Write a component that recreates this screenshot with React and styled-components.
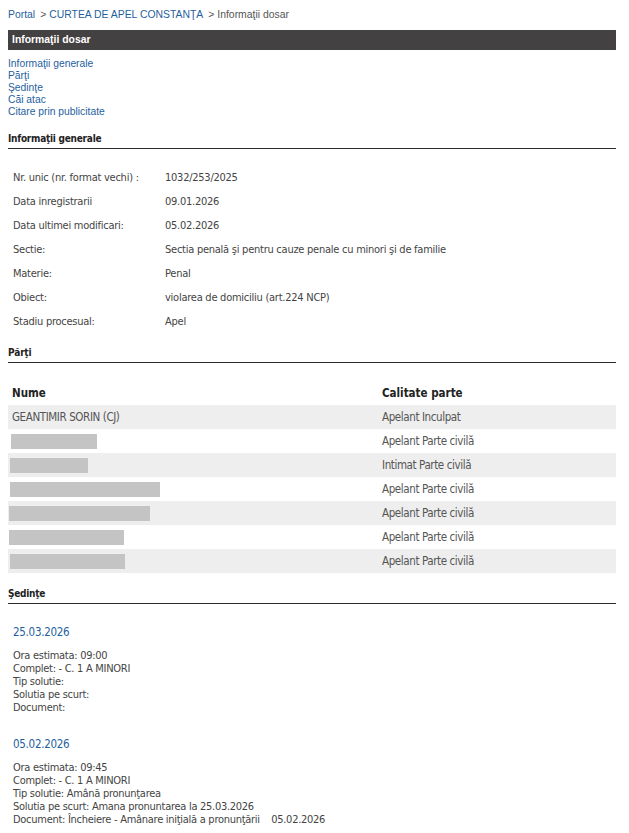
import React from "react";
import styled, { createGlobalStyle } from "styled-components";

const Global = createGlobalStyle`
  body { margin: 8px; background: #fff; font-family: "Liberation Sans", Arial, sans-serif; }
`;

const Tahoma = `"DejaVu Sans Condensed", Tahoma, sans-serif`;

const Page = styled.div`
  width: 608px;
`;

const Crumbs = styled.div`
  font-size: 10.4px;
  line-height: 14px;
  color: #555;
  a { color: #1f5f9e; text-decoration: none; }
`;

const Sep = styled.span`
  margin: 0 3px 0 5px;
  color: #555;
`;

const TitleBar = styled.div`
  margin-top: 8px;
  height: 20px;
  background: #444142;
  color: #fff;
  font-weight: bold;
  font-size: 10.4px;
  line-height: 20px;
  padding-left: 4px;
`;

const Nav = styled.div`
  margin-top: 8px;
  display: flex;
  flex-direction: column;
  font-size: 10.3px;
  line-height: 12px;
  a { color: #1f5f9e; text-decoration: none; }
`;

const SectionHead = styled.div`
  margin-top: ${(p) => p.$mt}px;
  font-family: ${Tahoma};
  font-weight: bold;
  font-size: 10px;
  letter-spacing: -0.25px;
  line-height: 13px;
  color: #222;
  padding-bottom: 3px;
  border-bottom: 1px solid #2b2b2b;
`;

const InfoTable = styled.div`
  margin-top: 16px;
  display: grid;
  grid-template-columns: 152px 1fr;
  grid-auto-rows: 24px;
  font-family: ${Tahoma};
  font-size: 11px;
  letter-spacing: -0.25px;
  color: #444;
  align-items: center;
  padding-left: 5px;
`;

const PartiTable = styled.div`
  margin-top: 18px;
  font-family: ${Tahoma};
`;

const PRow = styled.div`
  display: grid;
  grid-template-columns: 370px 1fr;
  height: 24px;
  align-items: center;
  background: ${(p) => (p.$striped ? "#eeeeee" : "#fff")};
  color: ${(p) => (p.$head ? "#222" : "#555")};
  font-weight: ${(p) => (p.$head ? "bold" : "normal")};
  font-size: 11.5px;
  letter-spacing: ${(p) => (p.$head ? "0px" : "-0.4px")};
  padding-left: 4px;
`;

const Redact = styled.span`
  display: block;
  height: 15px;
  background: #c4c4c4;
  margin-left: ${(p) => p.$x}px;
  width: ${(p) => p.$w}px;
`;

const Hearing = styled.div`
  margin-top: ${(p) => p.$mt}px;
  padding-left: 5px;
  font-family: ${Tahoma};
  font-size: 11px;
  letter-spacing: -0.28px;
  color: #444;
`;

const HDate = styled.div`
  color: #1f5f9e;
  font-size: 11.5px;
  line-height: 14px;
  margin-bottom: 10px;
`;

const HLine = styled.div`
  line-height: 13px;
  white-space: pre;
`;

const info = [
  ["Nr. unic (nr. format vechi) :", "1032/253/2025"],
  ["Data inregistrarii", "09.01.2026"],
  ["Data ultimei modificari:", "05.02.2026"],
  ["Sectie:", "Sectia penală şi pentru cauze penale cu minori şi de familie"],
  ["Materie:", "Penal"],
  ["Obiect:", "violarea de domiciliu (art.224 NCP)"],
  ["Stadiu procesual:", "Apel"],
];

const parti = [
  { name: "GEANTIMIR SORIN (CJ)", q: "Apelant Inculpat" },
  { r: [-1, 86], q: "Apelant Parte civilă" },
  { r: [-2, 78], q: "Intimat Parte civilă" },
  { r: [-2, 150], q: "Apelant Parte civilă" },
  { r: [-3, 141], q: "Apelant Parte civilă" },
  { r: [-3, 115], q: "Apelant Parte civilă" },
  { r: [-2, 115], q: "Apelant Parte civilă" },
];

const hearings = [
  {
    date: "25.03.2026",
    lines: [
      "Ora estimata: 09:00",
      "Complet: - C. 1 A MINORI",
      "Tip solutie:",
      "Solutia pe scurt:",
      "Document:",
    ],
  },
  {
    date: "05.02.2026",
    lines: [
      "Ora estimata: 09:45",
      "Complet: - C. 1 A MINORI",
      "Tip solutie: Amână pronunţarea",
      "Solutia pe scurt: Amana pronuntarea la 25.03.2026",
      "Document: Încheiere - Amânare iniţială a pronunţării    05.02.2026",
    ],
  },
];

export default function App() {
  return (
    <Page>
      <Global />
      <Crumbs>
        <a href="#">Portal</a>
        <Sep>&gt;</Sep>
        <a href="#">CURTEA DE APEL CONSTANŢA</a>
        <Sep>&gt;</Sep>
        Informaţii dosar
      </Crumbs>
      <TitleBar>Informaţii dosar</TitleBar>
      <Nav>
        <a href="#">Informaţii generale</a>
        <a href="#">Părţi</a>
        <a href="#">Şedinţe</a>
        <a href="#">Căi atac</a>
        <a href="#">Citare prin publicitate</a>
      </Nav>
      <SectionHead $mt={14}>Informaţii generale</SectionHead>
      <InfoTable>
        {info.map(([k, v]) => (
          <React.Fragment key={k}>
            <span>{k}</span>
            <span>{v}</span>
          </React.Fragment>
        ))}
      </InfoTable>
      <SectionHead $mt={13}>Părţi</SectionHead>
      <PartiTable>
        <PRow $head>
          <span>Nume</span>
          <span>Calitate parte</span>
        </PRow>
        {parti.map((p, i) => (
          <PRow key={i} $striped={i % 2 === 0}>
            {p.r ? <Redact $x={p.r[0]} $w={p.r[1]} /> : <span>{p.name}</span>}
            <span>{p.q}</span>
          </PRow>
        ))}
      </PartiTable>
      <SectionHead $mt={14}>Şedinţe</SectionHead>
      {hearings.map((h, i) => (
        <Hearing key={h.date} $mt={i === 0 ? 21 : 23}>
          <HDate>{h.date}</HDate>
          {h.lines.map((l) => (
            <HLine key={l}>{l}</HLine>
          ))}
        </Hearing>
      ))}
    </Page>
  );
}
